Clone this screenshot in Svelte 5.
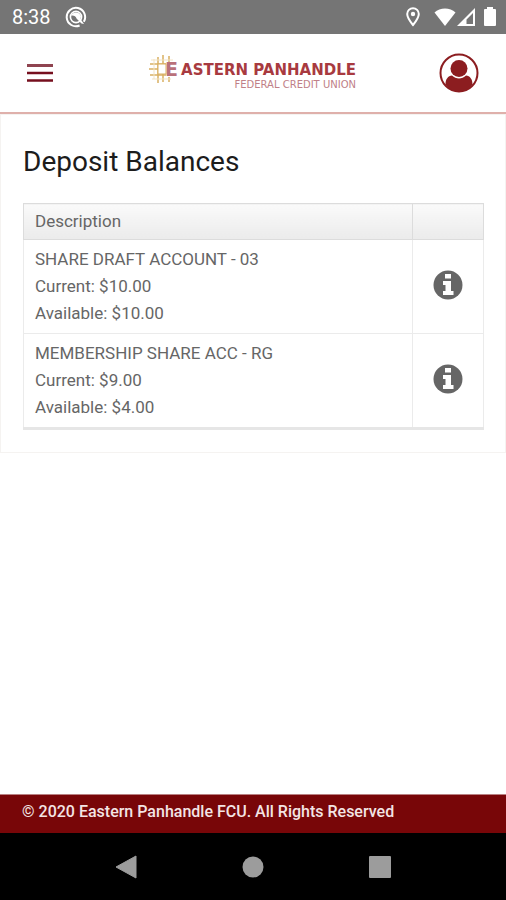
<script lang="ts">
	type Account = {
		name: string;
		current: string;
		available: string;
	};

	const accounts: Account[] = [
		{ name: 'SHARE DRAFT ACCOUNT - 03', current: '$10.00', available: '$10.00' },
		{ name: 'MEMBERSHIP SHARE ACC - RG', current: '$9.00', available: '$4.00' }
	];
</script>

<div class="screen">
	<div class="status-bar">
		<span class="time">8:38</span>
		<svg class="status-app" width="22" height="22" viewBox="0 0 22 22" aria-hidden="true">
			<path
				d="M14.6 19.5A9.2 9.2 0 1 1 18.8 15.8"
				fill="none"
				stroke="#fff"
				stroke-width="2"
			/>
			<circle cx="11" cy="11" r="5.6" fill="none" stroke="#fff" stroke-width="1.6" />
			<path d="M6 9.5C8 5.5 14 5.2 16 10L15.5 13L19 18L16.5 17.5L11.5 12.5C11 10 8.5 9 6 9.5Z" fill="#fff" />
		</svg>
		<svg class="status-pin" width="14" height="20" viewBox="0 0 14 20" aria-hidden="true">
			<path
				d="M7 1.2A5.8 5.8 0 0 0 1.2 7C1.2 11 7 18 7 18S12.8 11 12.8 7A5.8 5.8 0 0 0 7 1.2Z"
				fill="none"
				stroke="#fff"
				stroke-width="2"
			/>
			<circle cx="7" cy="7" r="2.2" fill="#fff" />
		</svg>
		<svg class="status-wifi" width="22" height="18" viewBox="0 0 22 18" aria-hidden="true">
			<path d="M0.5 4.5C6 -0.8 16 -0.8 21.5 4.5L11 18Z" fill="#fff" />
		</svg>
		<svg class="status-signal" width="18" height="18" viewBox="0 0 18 18" aria-hidden="true">
			<path d="M18 0V18H0ZM16 5L9.5 11.5V16H16Z" fill="#fff" fill-rule="evenodd" />
		</svg>
		<svg class="status-battery" width="12" height="20" viewBox="0 0 12 20" aria-hidden="true">
			<path
				d="M3 0H9V2H11A1 1 0 0 1 12 3V18A1 1 0 0 1 11 19H1A1 1 0 0 1 0 18V3A1 1 0 0 1 1 2H3Z"
				fill="#fff"
			/>
		</svg>
	</div>

	<header class="app-header">
		<button class="icon-btn" type="button" aria-label="Menu">
			<svg width="26" height="20" viewBox="0 0 26 20" aria-hidden="true">
				<path d="M0 2.5H26" stroke="#8f4450" stroke-width="3" />
				<path d="M0 10H26M0 17.5H26" stroke="#760f1e" stroke-width="2.5" />
			</svg>
		</button>

		<svg class="logo" width="208" height="36" viewBox="0 0 208 36" role="img" aria-label="Eastern Panhandle Federal Credit Union">
			<g stroke="#d9b062" stroke-width="1.5">
				<path d="M9 2V28M14 0V11M14 19V27M20 1V7M20 22V27" />
				<path d="M1 9H17M0 14H9M1 20H17" />
			</g>
			<path d="M2 5H24M3 24H22M5 4V24" stroke="#f2e3c4" />
			<rect x="9" y="9" width="8" height="10" fill="#fff" stroke="#d9b062" />
			<text class="logo-initial" x="16" y="21">E</text>
			<text class="logo-name" x="207" y="20">ASTERN PANHANDLE</text>
			<text class="logo-sub" x="207" y="33">FEDERAL CREDIT UNION</text>
		</svg>

		<button class="icon-btn profile-btn" type="button" aria-label="Profile">
			<svg width="40" height="40" viewBox="0 0 40 40" aria-hidden="true">
				<circle cx="20" cy="20" r="18.5" fill="#fff" stroke="#8c1d20" stroke-width="2" />
				<circle cx="20" cy="15.5" r="8.5" fill="#8c1d20" />
				<path
					d="M6.500 31.500C6.500 26 9 23 13 22.500C17 26.500 23 26.500 27 22.500C31 23 33.500 26 33.500 31.500C30 36 25.500 38.500 20 38.500S10 36 6.500 31.500Z"
					fill="#8c1d20"
				/>
			</svg>
		</button>
	</header>

	<main>
		<section class="panel">
			<h1>Deposit Balances</h1>
			<table>
				<thead>
					<tr>
						<th scope="col">Description</th>
						<th class="info-col" scope="col" aria-label="Details"></th>
					</tr>
				</thead>
				<tbody>
					{#each accounts as account}
						<tr>
							<td>
								<div>{account.name}</div>
								<div>Current: {account.current}</div>
								<div>Available: {account.available}</div>
							</td>
							<td class="info-col">
								<button class="info-btn" type="button" aria-label={`Details for ${account.name}`}>
									<svg width="30" height="30" viewBox="0 0 30 30" aria-hidden="true">
										<circle cx="15" cy="15" r="14.5" fill="#666" />
										<path d="M12 4H18V8.5H12ZM10 11H18V21H20.5V25H10V21H12.5V15H10Z" fill="#fff" />
									</svg>
								</button>
							</td>
						</tr>
					{/each}
				</tbody>
			</table>
		</section>
	</main>

	<footer>© 2020 Eastern Panhandle FCU. All Rights Reserved</footer>

	<nav class="system-nav" aria-label="System">
		<button class="icon-btn" type="button" aria-label="Back">
			<svg width="22" height="24" viewBox="0 0 22 24" aria-hidden="true">
				<path d="M21 1V23L1 12Z" fill="#9c9c9c" stroke="#9c9c9c" stroke-linejoin="round" />
			</svg>
		</button>
		<button class="icon-btn" type="button" aria-label="Home">
			<svg width="22" height="22" viewBox="0 0 22 22" aria-hidden="true">
				<circle cx="11" cy="11" r="10.5" fill="#9c9c9c" />
			</svg>
		</button>
		<button class="icon-btn" type="button" aria-label="Recent apps">
			<svg width="22" height="22" viewBox="0 0 22 22" aria-hidden="true">
				<rect width="22" height="22" rx="1" fill="#9c9c9c" />
			</svg>
		</button>
	</nav>
</div>

<style>
	:global(body) {
		margin: 0;
		background: #fff;
	}

	.screen {
		min-height: 100vh;
		display: flex;
		flex-direction: column;
		font-family: Roboto, 'Liberation Sans', sans-serif;
		color: #666;
	}

	svg {
		display: block;
	}

	.status-bar {
		display: flex;
		align-items: center;
		height: 34px;
		padding: 0 10px 0 12px;
		background: #757575;
		color: #fff;
	}

	.time {
		font-size: 20px;
		line-height: 34px;
	}

	.status-app {
		margin-left: 14px;
	}

	.status-pin {
		margin-left: auto;
	}

	.status-wifi {
		margin-left: 14px;
	}

	.status-signal {
		margin-left: 1px;
	}

	.status-battery {
		margin-left: 9px;
	}

	.icon-btn,
	.info-btn {
		display: block;
		padding: 0;
		border: none;
		background: none;
		cursor: pointer;
	}

	.app-header {
		display: grid;
		grid-template-columns: 1fr auto 1fr;
		align-items: center;
		box-sizing: border-box;
		height: 80px;
		padding: 0 27px 1px;
		border-bottom: 2px solid #dfb0ab;
	}

	.app-header .icon-btn {
		justify-self: start;
	}

	.app-header .profile-btn {
		justify-self: end;
	}

	.logo-initial,
	.logo-name,
	.logo-sub {
		font-family: 'DejaVu Sans', sans-serif;
	}

	.logo-initial {
		font-size: 19px;
		font-weight: 700;
		fill: #b9707a;
	}

	.logo-name {
		font-size: 15px;
		font-weight: 700;
		text-anchor: end;
		fill: #a83a40;
	}

	.logo-sub {
		font-size: 10px;
		text-anchor: end;
		fill: #c08087;
	}

	main {
		flex: 1;
	}

	.panel {
		padding: 27px 21px 22px 22px;
		border: 1px solid #f5f3f1;
	}

	h1 {
		margin: 0 0 21px;
		font-size: 28px;
		font-weight: 400;
		line-height: 40px;
		color: #1c1c1c;
	}

	table {
		width: 100%;
		border-collapse: collapse;
		border: 1px solid #e2e2e2;
		border-bottom: 3px solid #e6e6e6;
		font-size: 17px;
		line-height: 27px;
	}

	th {
		height: 35px;
		padding: 0 11px;
		border: 1px solid #dcdcdc;
		background: linear-gradient(#fafafa, #ebebeb);
		font-weight: 400;
		text-align: left;
	}

	td {
		padding: 6px 11px;
		border: 1px solid #ebebeb;
	}

	.info-col {
		width: 70px;
		padding: 0;
	}

	td.info-col {
		padding-bottom: 3px;
	}

	.info-btn {
		margin: 0 auto;
	}

	footer {
		padding: 3px 22px 8px;
		border-top: 1px solid #b98082;
		background: #780608;
		color: #f3e4e4;
		font-size: 16px;
		font-weight: 500;
		line-height: 27px;
	}

	.system-nav {
		display: flex;
		align-items: center;
		justify-content: space-between;
		height: 67px;
		padding: 0 115px;
		background: #000;
	}
</style>
